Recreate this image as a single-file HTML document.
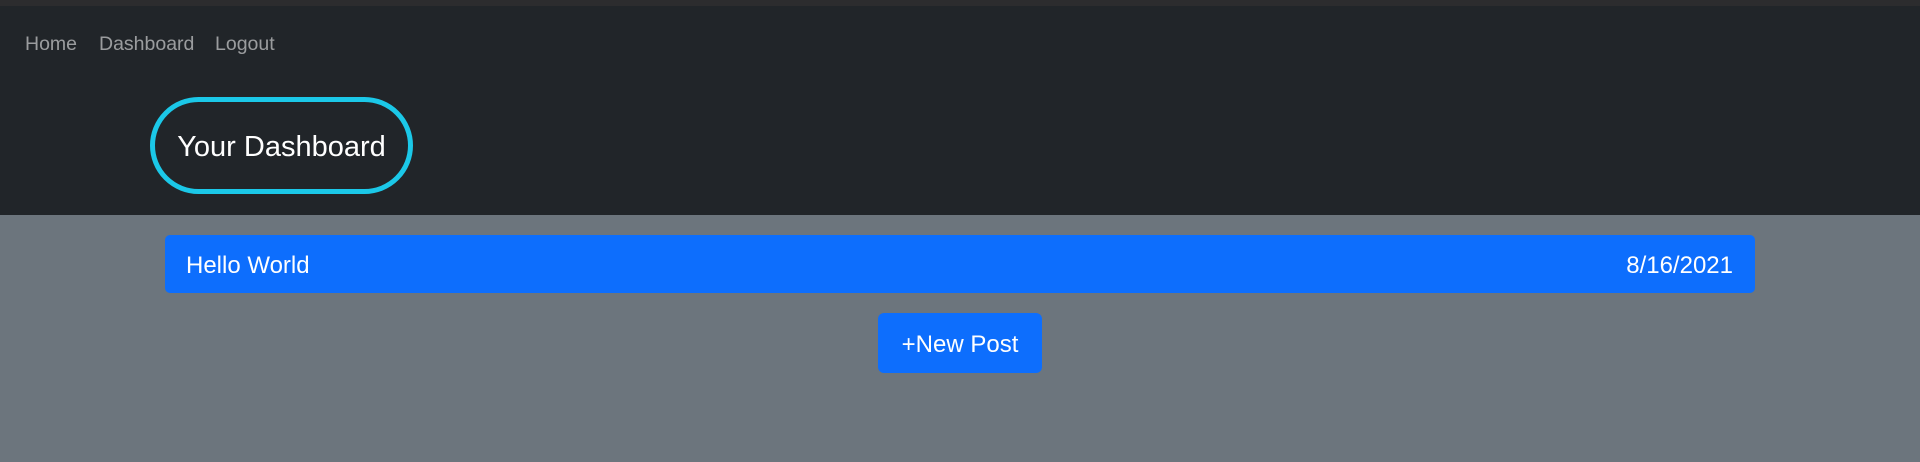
<!DOCTYPE html>
<html><head><style>
html,body{margin:0;padding:0;width:1920px;height:462px;overflow:hidden;background:#6c757d;font-family:"Segoe UI","Liberation Sans",sans-serif;}
.top{position:absolute;left:0;top:0;width:1920px;height:6px;background:#2c2c2e;}
.hdr{position:absolute;left:0;top:6px;width:1920px;height:209px;background:#212529;}
.nav{position:absolute;top:33px;font-size:19.5px;color:rgba(255,255,255,.55);}
.pill{position:absolute;left:150px;top:97px;width:263px;height:97px;box-sizing:border-box;border:5px solid #1bc8e8;border-radius:50px;color:#fff;font-size:29px;line-height:90px;text-align:center;}
.bar{position:absolute;left:165px;top:235px;width:1590px;height:58px;background:#0d6efd;border-radius:5px;color:#fff;font-size:24px;line-height:61px;}
.btn{position:absolute;left:878px;top:313px;width:164px;height:60px;background:#0d6efd;border-radius:6px;color:#fff;font-size:24px;line-height:63px;text-align:center;}
</style></head><body>
<div class="top"></div>
<div class="hdr"></div>
<div class="nav" style="left:25px">Home</div>
<div class="nav" style="left:99px">Dashboard</div>
<div class="nav" style="left:215px">Logout</div>
<div class="pill">Your Dashboard</div>
<div class="bar"><span style="position:absolute;left:21px">Hello World</span><span style="position:absolute;right:22px">8/16/2021</span></div>
<div class="btn">+New Post</div>
</body></html>
